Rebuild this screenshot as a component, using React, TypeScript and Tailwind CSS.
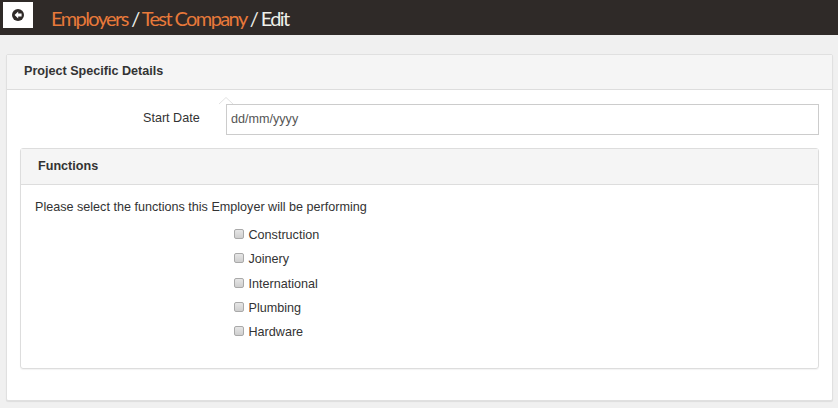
const functions = ["Construction", "Joinery", "International", "Plumbing", "Hardware"];

export default function App() {
  return (
    <div className="min-h-[408px] bg-[#f0f0f0] font-['Liberation_Sans',Arial,sans-serif] text-[12.6px] text-[#333]">
      {/* Top bar */}
      <div className="flex h-[35px] items-start bg-[#2f2a28] pl-[3px] pt-[2px]">
        <button className="flex h-[26px] w-[30px] items-center justify-center bg-white">
          <svg width="12" height="12" viewBox="0 0 12 12">
            <circle cx="6" cy="6" r="6" fill="#2f2a28" />
            <path d="M6.2 2.4 L2.6 6 L6.2 9.6 V7.4 H9.6 V4.6 H6.2 Z" fill="#fff" />
          </svg>
        </button>
        <div className="ml-[18px] font-['Lato',sans-serif] text-[20px] leading-[32px] tracking-[-1.6px] text-[#eef0ea]">
          <span className="text-[#e8793a]">Employers</span>
          <span> / </span>
          <span className="text-[#e8793a]">Test Company</span>
          <span> / Edit</span>
        </div>
      </div>

      {/* Main panel */}
      <div className="ml-[6px] mr-[5px] mt-[19px] h-[347px] rounded-[2px] border border-[#e0e0e0] bg-white shadow-[0_1px_1px_rgba(0,0,0,0.08)]">
        <div className="flex h-[35px] items-center border-b border-[#ddd] bg-[#f5f5f5] pl-[17px] pb-[1px] text-[12.6px] font-bold">
          Project Specific Details
        </div>

        <div className="relative flex items-start pl-[136px] pt-[14px]">
          <svg className="absolute left-[212px] top-[7px]" width="14" height="8" viewBox="0 0 14 8">
            <path d="M0 7 L7 0.5 L14 7" fill="#fff" stroke="#e2e2e2" />
          </svg>
          <label className="mt-[6px] w-[83px] leading-[16px]">Start Date</label>
          <input
            readOnly
            value="dd/mm/yyyy"
            className="h-[31px] w-[593px] border border-[#ccc] bg-white px-[4px] pb-[2px] text-[12.6px] text-[#555] outline-none"
          />
        </div>

        {/* Functions panel */}
        <div className="ml-[13px] mr-[13px] mt-[13px] h-[221px] rounded-[3px] border border-[#ddd] shadow-[0_1px_1px_rgba(0,0,0,0.05)]">
          <div className="flex h-[36px] items-center border-b border-[#ddd] bg-[#f5f5f5] pb-[1px] pl-[17px] text-[12.6px] font-bold">
            Functions
          </div>
          <p className="ml-[14px] mt-[14px] leading-[16px]">
            Please select the functions this Employer will be performing
          </p>
          <div className="ml-[213px] mt-[12px] flex flex-col gap-[8.3px]">
            {functions.map((name) => (
              <label key={name} className="flex h-[16px] items-center gap-[4.5px] leading-[16px]">
                <input
                  type="checkbox"
                  className="h-[10px] w-[10px] -translate-y-[1px] appearance-none rounded-[2px] border border-[#a9a9a9] bg-gradient-to-b from-[#e6e6e6] to-[#cfcfcf]"
                />
                <span>{name}</span>
              </label>
            ))}
          </div>
        </div>
      </div>
    </div>
  );
}
